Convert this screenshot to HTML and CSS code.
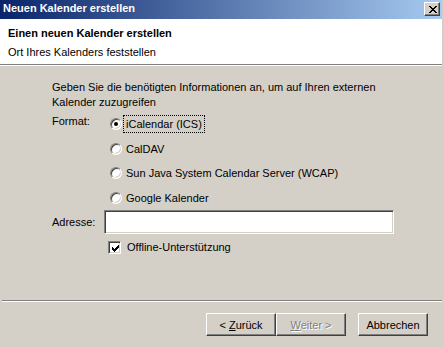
FILE: index.html
```html
<!DOCTYPE html>
<html lang="de">
<head>
    <meta charset="UTF-8">
    <title>Neuen Kalender erstellen</title>
    <link rel="stylesheet" href="styles.css">
</head>
<body>
    <div class="dialog">
        <div class="titlebar">
            <span class="titlebar-text">Neuen Kalender erstellen</span>
            <span class="close-btn">
                <svg width="8" height="7" viewBox="0 0 8 7" shape-rendering="crispEdges">
                    <path d="M0 0h2v1H0z M6 0h2v1H6z M1 1h2v1H1z M5 1h2v1H5z M2 2h4v1H2z M3 3h2v1H3z M2 4h4v1H2z M1 5h2v1H1z M5 5h2v1H5z M0 6h2v1H0z M6 6h2v1H6z" fill="#000"/>
                </svg>
            </span>
        </div>

        <div class="header">
            <div class="header-title">Einen neuen Kalender erstellen</div>
            <div class="header-sub">Ort Ihres Kalenders feststellen</div>
        </div>

        <div class="content">
            <p class="intro">Geben Sie die benötigten Informationen an, um auf Ihren externen<br>Kalender zuzugreifen</p>

            <div class="form">
                <div class="form-label format-label">Format:</div>
                <div class="options">
                    <div class="option">
                        <span class="radio checked"></span>
                        <span class="option-text focused">iCalendar (ICS)</span>
                    </div>
                    <div class="option">
                        <span class="radio"></span>
                        <span class="option-text">CalDAV</span>
                    </div>
                    <div class="option">
                        <span class="radio"></span>
                        <span class="option-text">Sun Java System Calendar Server (WCAP)</span>
                    </div>
                    <div class="option">
                        <span class="radio"></span>
                        <span class="option-text">Google Kalender</span>
                    </div>
                </div>

                <div class="form-label address-label">Adresse:</div>
                <div class="address-input"></div>

                <div></div>
                <div class="check-row">
                    <span class="checkbox">
                        <svg width="7" height="7" viewBox="0 0 7 7" shape-rendering="crispEdges">
                            <path d="M6 0h1v1H6z M5 1h2v1H5z M0 2h1v1H0z M4 2h3v1H4z M0 3h2v1H0z M3 3h3v1H3z M0 4h5v1H0z M1 5h3v1H1z M2 6h1v1H2z" fill="#000"/>
                        </svg>
                    </span>
                    <span class="check-text">Offline-Unterstützung</span>
                </div>
            </div>
        </div>

        <div class="footer">
            <div class="separator"></div>
            <div class="buttons">
                <button class="btn">&lt; <u>Z</u>urück</button>
                <button class="btn disabled"><u>W</u>eiter &gt;</button>
                <button class="btn btn-cancel">Abbrechen</button>
            </div>
        </div>
    </div>
</body>
</html>
```

FILE: styles.css
```css
* {
    margin: 0;
    padding: 0;
    box-sizing: border-box;
}

body {
    font-family: 'Liberation Sans', Arial, sans-serif;
    font-size: 11px;
    line-height: 13px;
    color: #000;
    background-color: #d4d0c8;
    width: 444px;
    height: 347px;
    overflow: hidden;
}

.dialog {
    width: 442px;
    height: 347px;
    display: flex;
    flex-direction: column;
}

/* title bar */
.titlebar {
    height: 19px;
    display: flex;
    justify-content: space-between;
    align-items: flex-start;
    padding: 2px 2px 0 3px;
    background: linear-gradient(to right, #0a246a, #a6caf0);
}

.titlebar-text {
    color: #fff;
    font-weight: bold;
}

.close-btn {
    width: 16px;
    height: 14px;
    display: flex;
    align-items: center;
    justify-content: center;
    padding-left: 1px;
    background-color: #d4d0c8;
    border: 1px solid;
    border-color: #fff #404040 #404040 #fff;
    box-shadow: inset -1px -1px #808080;
}

/* header */
.header {
    height: 46px;
    background-color: #fff;
    padding: 8px 0 0 8px;
    border-bottom: 1px solid #808080;
    box-shadow: 0 1px #fff;
}

.header-title {
    font-weight: bold;
}

.header-sub {
    margin-top: 6px;
}

/* content */
.content {
    padding: 15px 0 0 52px;
}

.intro {
    line-height: 15px;
}

.form {
    display: grid;
    grid-template-columns: 52px 1fr;
    margin-top: 2px;
}

.format-label {
    padding-top: 3px;
}

.options {
    padding-left: 6px;
}

.option {
    height: 24.5px;
    display: flex;
    align-items: center;
}

.radio {
    width: 12px;
    height: 12px;
    margin-right: 1px;
    border-radius: 50%;
    background-color: #fff;
    border: 1px solid;
    border-color: #808080 #fff #fff #808080;
    box-shadow: inset 1px 1px #404040, inset -1px -1px #d4d0c8;
    display: flex;
    align-items: center;
    justify-content: center;
}

.radio.checked::after {
    content: '';
    width: 4px;
    height: 4px;
    border-radius: 50%;
    background-color: #000;
}

.option-text {
    border: 1px solid transparent;
    padding: 1px 2px;
    line-height: 14px;
}

.option-text.focused {
    border: 1px dotted #000;
}

.address-label {
    align-self: center;
}

.address-input {
    width: 290px;
    height: 24px;
    background-color: #fff;
    border: 1px solid;
    border-color: #808080 #fff #fff #808080;
    box-shadow: inset 1px 1px #404040, inset -1px -1px #d4d0c8;
}

.check-row {
    display: flex;
    align-items: center;
    margin-top: 7px;
    padding-left: 4px;
}

.checkbox {
    width: 13px;
    height: 13px;
    margin-right: 6px;
    padding: 3px 0 0 3px;
    background-color: #fff;
    border: 1px solid;
    border-color: #808080 #fff #fff #808080;
    box-shadow: inset 1px 1px #404040, inset -1px -1px #d4d0c8;
    display: flex;
}

.checkbox svg {
    margin: 0 0 0 0;
}

/* footer */
.footer {
    margin-top: auto;
    height: 47px;
}

.separator {
    margin-left: 2px;
    height: 1px;
    background-color: #808080;
    box-shadow: 0 1px #fff;
}

.buttons {
    display: flex;
    justify-content: flex-end;
    padding: 12px 14px 0 0;
}

.btn {
    width: 70px;
    height: 23px;
    font-family: 'Liberation Sans', Arial, sans-serif;
    font-size: 11px;
    color: #000;
    background-color: #d4d0c8;
    border: 1px solid;
    border-color: #fff #404040 #404040 #fff;
    box-shadow: inset -1px -1px #808080;
}

.btn u {
    text-decoration: underline;
}

.btn.disabled {
    color: #808080;
    text-shadow: 1px 1px #fff;
}

.btn-cancel {
    margin-left: 12px;
}
```
